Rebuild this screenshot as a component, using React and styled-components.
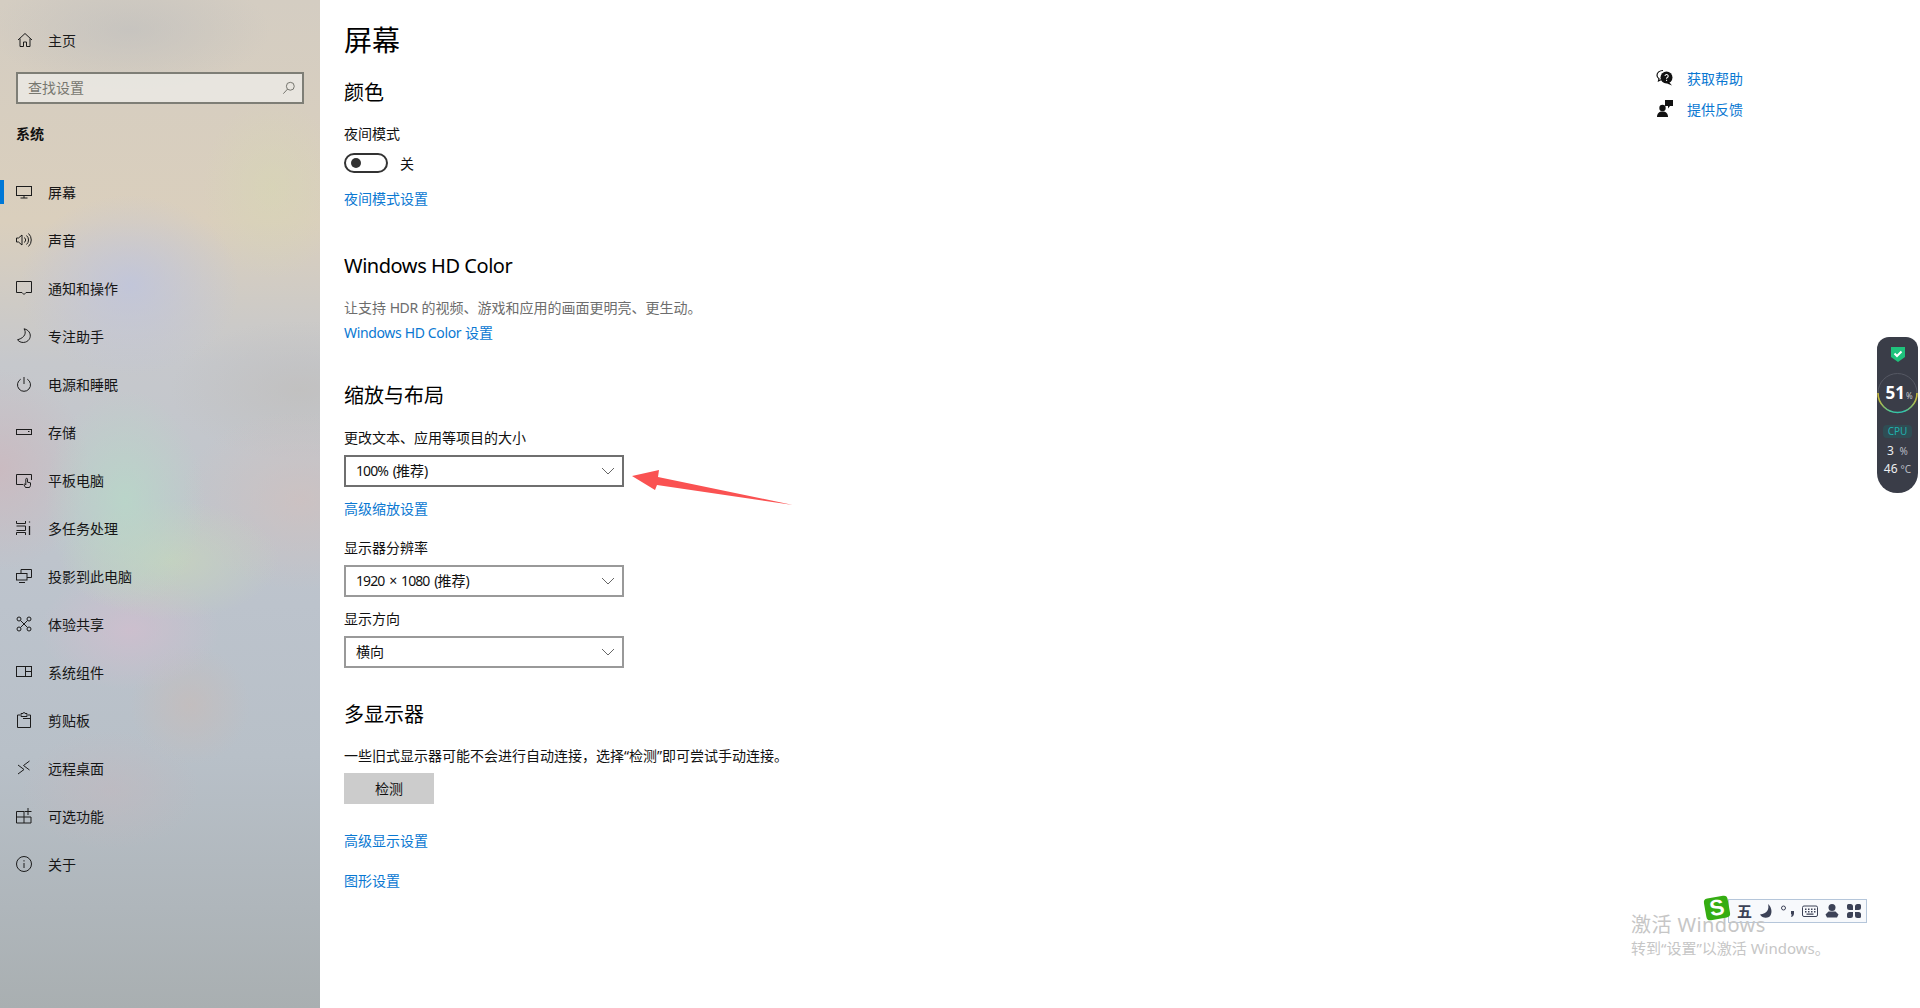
import React from "react";
import styled, { createGlobalStyle } from "styled-components";

const Global = createGlobalStyle`
  html, body { margin: 0; padding: 0; height: 1008px; overflow: hidden; background: #fff; }
  body { font-family: "Noto Sans", "Noto Sans CJK SC", sans-serif; font-size: 14px; color: #000; }
  * { box-sizing: border-box; }
`;

const Page = styled.div`
  display: flex;
  width: 1920px;
  height: 1008px;
  position: relative;
  overflow: hidden;
`;

const Sidebar = styled.nav`
  width: 320px;
  flex: none;
  height: 100%;
  padding-top: 16px;
  background:
    radial-gradient(ellipse 70px 90px at 272px 188px, rgba(214,216,178,.5), transparent),
    radial-gradient(ellipse 110px 90px at 130px 285px, rgba(190,196,222,.8), transparent),
    radial-gradient(ellipse 80px 110px at 125px 500px, rgba(184,216,200,.8), transparent),
    radial-gradient(ellipse 110px 60px at 170px 560px, rgba(200,214,186,.7), transparent),
    radial-gradient(ellipse 90px 60px at 130px 630px, rgba(208,190,206,.8), transparent),
    radial-gradient(ellipse 60px 60px at 190px 705px, rgba(198,188,186,.7), transparent),
    radial-gradient(ellipse 90px 60px at 110px 790px, rgba(196,184,190,.5), transparent),
    radial-gradient(ellipse 90px 100px at 0px 470px, rgba(204,184,190,.8), transparent),
    radial-gradient(ellipse 120px 90px at 300px 500px, rgba(208,192,190,.7), transparent),
    radial-gradient(ellipse 130px 70px at 300px 390px, rgba(192,190,188,.7), transparent),
    radial-gradient(ellipse 140px 60px at 130px 30px, rgba(190,190,190,.6), transparent),
    linear-gradient(180deg, #d4cdc2 0%, #dacfbd 22%, #c6c8cc 36%, #bcc3cc 60%, #b8c0c8 75%, #afb6bb 90%, #a9afb1 100%);
`;

const HomeRow = styled.div`
  display: flex;
  align-items: center;
  height: 48px;
  padding-left: 17px;
  gap: 15px;
  font-size: 14px;
  color: #1a1a1a;
`;

const Search = styled.div`
  display: flex;
  align-items: center;
  justify-content: space-between;
  width: 288px;
  height: 32px;
  margin: 8px 0 0 16px;
  padding: 0 6px 3px 10px;
  border: 2px solid #7e7e76;
  background: rgba(238, 238, 234, 0.72);
  color: #77776f;
  font-size: 14px;
`;

const GroupLabel = styled.div`
  margin: 20px 0 24px 16px;
  height: 20px;
  line-height: 20px;
  font-size: 14px;
  font-weight: 700;
  color: #111;
`;

const NavItem = styled.div`
  display: flex;
  align-items: center;
  position: relative;
  height: 48px;
  padding-left: 16px;
  gap: 16px;
  font-size: 14px;
  color: #161616;

  &::before {
    content: "";
    display: ${(p) => (p.$active ? "block" : "none")};
    position: absolute;
    left: 0;
    top: 12px;
    width: 4px;
    height: 24px;
    background: #0078d7;
  }
`;

const Icon = styled.svg`
  flex: none;
  width: 16px;
  height: 16px;
  fill: none;
  stroke: #1c1c1c;
  stroke-width: 1;
`;

const SearchIcon = styled(Icon)`
  width: 14px;
  height: 14px;
  margin-top: 3px;
  stroke: #66665f;
`;

const Main = styled.main`
  flex: 1;
  min-width: 0;
  padding: 20px 0 0 24px;
`;

const Title = styled.h1`
  margin: 0;
  height: 40px;
  line-height: 40px;
  font-size: 28px;
  font-weight: 400;
  color: #000;
`;

const Heading = styled.h2`
  margin: ${(p) => p.$top}px 0 0;
  height: 28px;
  line-height: 28px;
  font-size: 20px;
  font-weight: 400;
  color: #000;
`;

const Latin = styled.span`
  letter-spacing: ${(p) => p.$track}px;
  word-spacing: ${(p) => p.$words || 0}px;
`;

const Label = styled.div`
  margin-top: ${(p) => p.$top}px;
  height: 20px;
  line-height: 20px;
  font-size: 14px;
  color: ${(p) => (p.$muted ? "#6d6d6d" : "#111")};
`;

const Link = styled.a`
  display: block;
  width: fit-content;
  margin-top: ${(p) => p.$top}px;
  height: 20px;
  line-height: 20px;
  font-size: 14px;
  color: #0a78d2;
`;

const ToggleRow = styled.div`
  display: flex;
  align-items: center;
  gap: 12px;
  margin-top: 9px;
  height: 20px;
  font-size: 14px;
  color: #111;
`;

const Toggle = styled.span`
  display: flex;
  align-items: center;
  width: 44px;
  height: 20px;
  padding-left: 5px;
  border: 2px solid #333;
  border-radius: 10px;

  &::before {
    content: "";
    width: 10px;
    height: 10px;
    border-radius: 50%;
    background: #333;
  }
`;

const Select = styled.div`
  display: flex;
  align-items: center;
  justify-content: space-between;
  width: 280px;
  height: 32px;
  margin-top: ${(p) => p.$top}px;
  padding: 0 7px 2px 10px;
  border: 2px solid ${(p) => (p.$hot ? "#6f6f6f" : "#999")};
  font-size: 14px;
  color: #111;
`;

const Chevron = styled.svg`
  width: 14px;
  height: 14px;
  margin-top: 2px;
  fill: none;
  stroke: #666;
  stroke-width: 1;
`;

const Button = styled.div`
  display: flex;
  align-items: center;
  justify-content: center;
  width: 90px;
  height: 31px;
  margin-top: 7px;
  padding-bottom: 2px;
  background: #ccc;
  font-size: 14px;
  color: #111;
`;

const Aside = styled.aside`
  width: 264px;
  flex: none;
  padding-top: 68px;
  display: flex;
  flex-direction: column;
  gap: 11px;
`;

const HelpRow = styled.a`
  display: flex;
  align-items: center;
  gap: 13px;
  height: 20px;
  font-size: 14px;
  color: #0a78d2;
`;

const HelpIcon = styled.svg`
  width: 18px;
  height: 18px;
  flex: none;
`;

const Arrow = styled.svg`
  position: absolute;
  left: 630px;
  top: 466px;
  width: 166px;
  height: 42px;
`;

const Widget = styled.div`
  position: absolute;
  left: 1877px;
  top: 337px;
  width: 41px;
  height: 156px;
  border-radius: 12px 12px 20px 20px;
  background: #3a3d48;
  display: flex;
  flex-direction: column;
  align-items: center;
  padding-top: 9px;
  color: #fff;
`;

const Gauge = styled.div`
  position: relative;
  width: 41px;
  height: 44px;
  margin-top: 8px;
  display: flex;
  align-items: center;
  justify-content: center;
`;

const GaugeRing = styled.svg`
  position: absolute;
  inset: 0;
  width: 41px;
  height: 44px;
`;

const GaugeValue = styled.span`
  position: relative;
  font-family: "Noto Sans", sans-serif;
  font-size: 17px;
  font-weight: 700;
  line-height: 20px;
  margin: 2px 0 0 3px;
`;

const GaugeUnit = styled.span`
  font-size: 8px;
  font-weight: 400;
  color: #c4c6cc;
  margin-left: 1px;
`;

const CpuPill = styled.span`
  margin-top: 10px;
  width: 29px;
  height: 13px;
  line-height: 13px;
  border-radius: 4px;
  background: #2f4d54;
  color: #20b0ae;
  text-align: center;
  font-family: "Noto Sans", sans-serif;
  font-size: 10px;
`;

const Stat = styled.div`
  display: flex;
  justify-content: center;
  gap: 3px;
  width: 36px;
  margin-top: ${(p) => p.$top}px;
  height: 14px;
  line-height: 14px;
  font-family: "Noto Sans", sans-serif;
  font-size: 12px;
  color: #eceef0;

  small {
    font-size: 10px;
    color: #b9bcc4;
  }
`;

const ImeBar = styled.div`
  position: absolute;
  left: 1728px;
  top: 899px;
  width: 139px;
  height: 24px;
  display: flex;
  align-items: center;
  gap: 6px;
  padding-left: 8px;
  border: 1px solid #b5c6da;
  background: #f7f9fc;
`;

const ImeGlyph = styled.span`
  font-family: "Noto Sans CJK SC", sans-serif;
  font-size: 15px;
  font-weight: 700;
  line-height: 20px;
  color: #3c4257;
`;

const ImeIcon = styled.svg`
  width: 16px;
  height: 16px;
  flex: none;
  fill: #3c4257;
`;

const SogouLogo = styled.span`
  position: absolute;
  left: 1705px;
  top: 897px;
  width: 24px;
  height: 22px;
  border-radius: 4px;
  background: #35ad12;
  transform: rotate(-10deg);
  color: #fff;
  text-align: center;
  line-height: 22px;
  font-family: "Liberation Sans", sans-serif;
  font-size: 22px;
  font-weight: 700;
`;

const Watermark = styled.div`
  position: absolute;
  left: 1631px;
  top: 911px;
  color: #c6c6c6;
  pointer-events: none;
`;

const WatermarkTitle = styled.div`
  height: 28px;
  line-height: 28px;
  font-size: 20px;
  letter-spacing: 0.4px;
`;

const WatermarkSub = styled.div`
  height: 18px;
  line-height: 18px;
  font-size: 15px;
`;

const icons = {
  display: <><rect x=".5" y="2.5" width="15" height="9" /><path d="M8 11.5v2.5M4.5 14h7" /></>,
  sound: <><path d="M.5 6h2L6 3v10l-3.500-3h-2z" /><path d="M8.500 5.500a3.500 3.500 0 0 1 0 5M10.500 3.500a6 6 0 0 1 0 9M12.500 1.500a9 9 0 0 1 0 13" /></>,
  notify: <path d="M.5 1.500h15v11h-5.500L8 14.500l-2-2H.5z" />,
  moon: <path d="M8 .8c2.500 3.500 1.500 8.800-6.500 11 1.800 2.500 5.200 3.200 8 2.300 3.800-1.300 5.500-5 4.500-8.300C13.300 3.300 11 1.300 8 .8z" />,
  power: <><path d="M8 1v7" /><path d="M4.700 3.200a6.500 6.500 0 1 0 6.600 0" /></>,
  storage: <><rect x=".5" y="5.500" width="15" height="5" /><path d="M12 7.500h1.500" /></>,
  tablet: <><path d="M7 12.500H.5v-10h15V8" /><path d="M9.500 15.500 7.800 12.500l1-.6 1 1V7.200a.8.8 0 0 1 1.700 0v3l3 .6v2.700l-1 2z" /></>,
  multi: <><path d="M.5 1v2.500h9V1M.5 15v-2.500h9V15M.5 6h9v4.500h-9" /><path d="M13.500 1.500v1M13.500 6v9" strokeWidth="1.300" /></>,
  project: <><path d="M5 5V1.500h10.500v8H11" /><rect x=".5" y="5.500" width="10.500" height="6.500" /><path d="M3 14.500h6" /></>,
  share: <><circle cx="3" cy="3" r="2" /><circle cx="13" cy="3" r="2" /><circle cx="3" cy="13" r="2" /><circle cx="13" cy="13" r="2" /><path d="M4.500 4.500l7 7M11.500 4.500l-7 7" /></>,
  parts: <><rect x=".5" y="2.500" width="15" height="10" /><path d="M9.500 2.500v10M9.500 7.500h6" /></>,
  clip: <><path d="M4 3H1.500v12.500h13V3H12" /><path d="M5 4.500V1.500h2a1 1 0 0 1 2 0h2v3z" /><path d="M7 6.500h7.500" /></>,
  remote: <><path d="M2 5l6 4.500-6 4.500" /><path d="M13.500 1 7.500 5.500l6 4.500" /></>,
  feature: <><path d="M.5 3.500h7.500v11.500H.5zM8 9h7v6H8M.5 9H8" /><path d="M12 0v7M8.500 3.500h7" /></>,
  about: <><circle cx="8" cy="8" r="7.500" /><path d="M8 7v5M8 4.200v1.300" /></>,
};

const navItems = [
  ["屏幕", "display"], ["声音", "sound"], ["通知和操作", "notify"], ["专注助手", "moon"],
  ["电源和睡眠", "power"], ["存储", "storage"], ["平板电脑", "tablet"], ["多任务处理", "multi"],
  ["投影到此电脑", "project"], ["体验共享", "share"], ["系统组件", "parts"], ["剪贴板", "clip"],
  ["远程桌面", "remote"], ["可选功能", "feature"], ["关于", "about"],
];

const Down = () => (
  <Chevron viewBox="0 0 14 14"><path d="M1 4l6 6 6-6" /></Chevron>
);

export default function App() {
  return (
    <Page>
      <Global />
      <Sidebar>
        <HomeRow>
          <Icon viewBox="0 0 16 16"><path d="M1 8 8 1.500 15 8M3 6.500V14.500h3.500V10h3v4.500H13V6.500" /></Icon>
          主页
        </HomeRow>
        <Search>
          查找设置
          <SearchIcon viewBox="0 0 16 16"><circle cx="9.500" cy="6" r="4.500" /><path d="M6.300 9.300 1.500 14.500" /></SearchIcon>
        </Search>
        <GroupLabel>系统</GroupLabel>
        {navItems.map(([label, key], i) => (
          <NavItem key={label} $active={i === 0}>
            <Icon viewBox="0 0 16 16">{icons[key]}</Icon>
            {label}
          </NavItem>
        ))}
      </Sidebar>

      <Main>
        <Title>屏幕</Title>
        <Heading $top={19}>颜色</Heading>
        <Label $top={17}>夜间模式</Label>
        <ToggleRow><Toggle />关</ToggleRow>
        <Link $top={16}>夜间模式设置</Link>

        <Heading $top={43}><Latin $track={-0.45}>Windows HD Color</Latin></Heading>
        <Label $top={18} $muted>让支持 <Latin $track={-0.4}>HDR</Latin> 的视频、游戏和应用的画面更明亮、更生动。</Label>
        <Link $top={5}><Latin $track={-0.35}>Windows HD Color</Latin> 设置</Link>

        <Heading $top={39}>缩放与布局</Heading>
        <Label $top={18}>更改文本、应用等项目的大小</Label>
        <Select $top={7} $hot><span><Latin $track={-0.9} $words={2}>100% (</Latin>推荐)</span><Down /></Select>
        <Link $top={12}>高级缩放设置</Link>
        <Label $top={19}>显示器分辨率</Label>
        <Select $top={7}><span><Latin $track={-0.9} $words={2}>1920 × 1080 (</Latin>推荐)</span><Down /></Select>
        <Label $top={12}>显示方向</Label>
        <Select $top={7}>横向<Down /></Select>

        <Heading $top={33}>多显示器</Heading>
        <Label $top={17}>一些旧式显示器可能不会进行自动连接，选择“检测”即可尝试手动连接。</Label>
        <Button>检测</Button>
        <Link $top={27}>高级显示设置</Link>
        <Link $top={20}>图形设置</Link>
      </Main>

      <Aside>
        <HelpRow>
          <HelpIcon viewBox="0 0 18 18">
            <path d="M7 1.500C3.500 1.500 1 3.600 1 6.200c0 1.500.8 2.700 2 3.500L2.500 12l3-1.500" fill="none" stroke="#111" strokeWidth="1.200" />
            <circle cx="10.500" cy="8.500" r="6" fill="#111" />
            <path d="M13 13l3 3.500-5-2z" fill="#111" />
            <path d="M9 7a1.600 1.600 0 1 1 2.300 1.500c-.6.300-.8.600-.8 1.300" fill="none" stroke="#fff" strokeWidth="1.100" />
            <rect x="10" y="10.800" width="1.100" height="1.100" fill="#fff" />
          </HelpIcon>
          获取帮助
        </HelpRow>
        <HelpRow>
          <HelpIcon viewBox="0 0 18 18">
            <path d="M9 0h8v6h-3l-2 2.500V6H9z" fill="#111" />
            <circle cx="6.500" cy="8" r="3.200" fill="#111" />
            <path d="M1 17c0-3.500 2-5.500 5.500-5.500S12 13.500 12 17z" fill="#111" />
          </HelpIcon>
          提供反馈
        </HelpRow>
      </Aside>

      <Arrow viewBox="630 466 166 42">
        <path d="M632 476 659 470 658 477 793 505 657 485 655 490z" fill="#fa5252" />
      </Arrow>

      <Widget>
        <svg width="16" height="17" viewBox="0 0 16 17">
          <path d="M1 1h14v10l-7 5-7-5z" fill="#1fc27c" />
          <path d="M4.500 7.500 7 10l4.500-4.500" fill="none" stroke="#fff" strokeWidth="2" />
        </svg>
        <Gauge>
          <GaugeRing viewBox="0 0 41 44">
            <defs>
              <linearGradient id="gaugeArc" x1="0" x2="1" y1="0" y2="0">
                <stop offset="0" stopColor="#c8b93a" />
                <stop offset=".35" stopColor="#3cc7a0" />
                <stop offset=".65" stopColor="#2bc4b0" />
                <stop offset="1" stopColor="#c8b93a" />
              </linearGradient>
            </defs>
            <circle cx="20.500" cy="22" r="19.500" fill="none" stroke="#555863" strokeWidth="1" />
            <path d="M1 22a19.500 19.500 0 0 0 39 0" fill="none" stroke="url(#gaugeArc)" strokeWidth="1.600" />
          </GaugeRing>
          <GaugeValue>51<GaugeUnit>%</GaugeUnit></GaugeValue>
        </Gauge>
        <CpuPill>CPU</CpuPill>
        <Stat $top={6}>3<small>&nbsp;%</small></Stat>
        <Stat $top={4}>46<small>°C</small></Stat>
      </Widget>

      <ImeBar>
        <ImeGlyph>五</ImeGlyph>
        <ImeIcon viewBox="0 0 16 16"><path d="M10 1c1.500 5-1 10-8 10.500 2 3.500 6 4 9 2.500 3.500-2.500 3.500-9-1-13z" /></ImeIcon>
        <ImeIcon viewBox="0 0 16 16">
          <circle cx="3.500" cy="5" r="2" fill="none" stroke="#3c4257" />
          <path d="M11 8h3v2.500c0 1.500-1 3-2.500 3.500l-.5-1c.7-.4 1-1 1-1.500h-1z" />
        </ImeIcon>
        <ImeIcon viewBox="0 0 16 16">
          <rect x=".5" y="3" width="15" height="10.500" rx="1.500" fill="none" stroke="#3c4257" />
          <path d="M3 5.500h1.500V7H3zM6 5.500h1.500V7H6zM9 5.500h1.500V7H9zM12 5.500h1.500V7H12zM3 8h1.500v1.500H3zM6 8h1.500v1.500H6zM9 8h1.500v1.500H9zM12 8h1.500v1.500H12zM4.500 10.500h7v1.300h-7z" />
        </ImeIcon>
        <ImeIcon viewBox="0 0 16 16">
          <circle cx="8" cy="4.500" r="3.500" />
          <path d="M1.500 11.500 4.500 8.500h7l3 3-1.500 3H3z" />
        </ImeIcon>
        <ImeIcon viewBox="0 0 16 16">
          <path d="M1 2.500A1.500 1.500 0 0 1 2.500 1h2A2.500 2.500 0 0 1 7 3.500V7H3.500A2.500 2.500 0 0 1 1 4.500zM9 3.500A2.500 2.500 0 0 1 11.500 1h2A1.500 1.500 0 0 1 15 2.500v2A2.500 2.500 0 0 1 12.500 7H9zM1 11.500A2.500 2.500 0 0 1 3.500 9H7v3.500A2.500 2.500 0 0 1 4.500 15h-2A1.500 1.500 0 0 1 1 13.500zM9 9h3.500a2.500 2.500 0 0 1 2.500 2.500v2a1.500 1.500 0 0 1-1.500 1.500h-2A2.500 2.500 0 0 1 9 12.500z" />
        </ImeIcon>
      </ImeBar>
      <Watermark>
        <WatermarkTitle>激活 Windows</WatermarkTitle>
        <WatermarkSub>转到“设置”以激活 Windows。</WatermarkSub>
      </Watermark>
      <SogouLogo>S</SogouLogo>
    </Page>
  );
}
